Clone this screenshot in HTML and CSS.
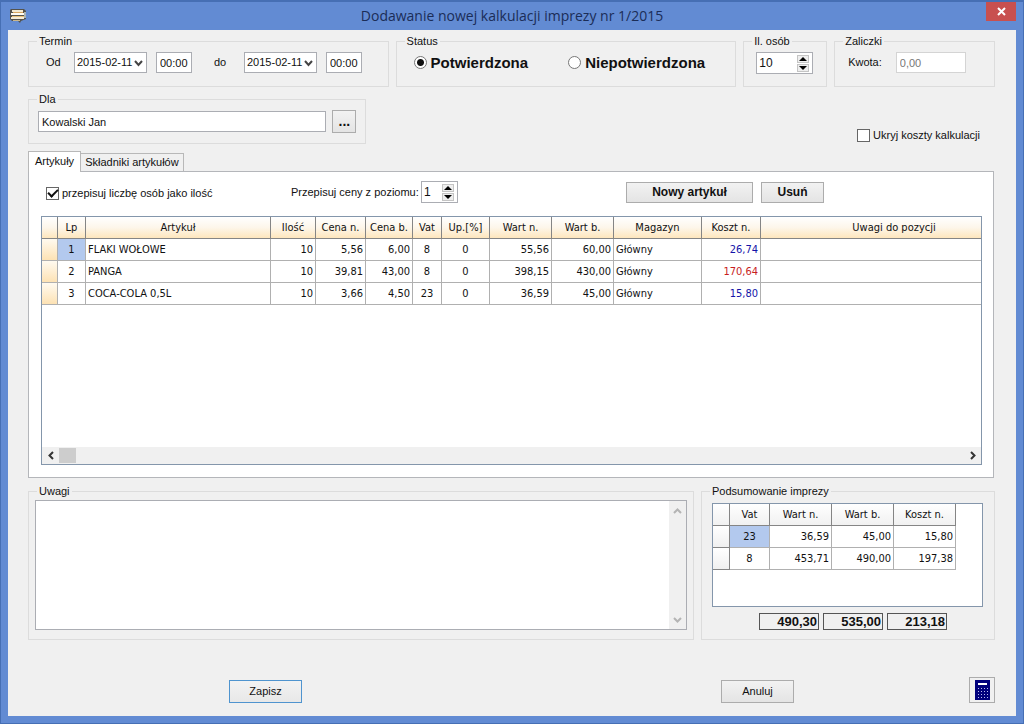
FILE: index.html
```html
<!DOCTYPE html>
<html lang="pl">
<head>
<meta charset="utf-8">
<title>Dodawanie nowej kalkulacji imprezy nr 1/2015</title>
<link rel="stylesheet" href="styles.css">
</head>
<body>
<div class="window">
  <header class="titlebar">
    <svg class="app-icon" width="18" height="16" viewBox="0 0 18 16" aria-hidden="true">
      <path d="M2 1h13l2 2v8l-5 2-1 2-2-2H3l-2-2V2z" fill="#55534c"/>
      <path d="M3 2h11v2H3z" fill="#f3ead2"/>
      <path d="M2 5h13v2H2z" fill="#fffdf4"/>
      <path d="M3 8h12v1H3z" fill="#e9c27a"/>
      <path d="M2 9h13v2H2z" fill="#f4ecd8"/>
      <path d="M4 4h10v1H4z" fill="#d9a860"/>
      <path d="M15 4h2v6h-2z" fill="#a9b4b5"/>
      <path d="M4 12h7v1H4z" fill="#c9b68c"/>
    </svg>
    <h1 class="title">Dodawanie nowej kalkulacji imprezy nr 1/2015</h1>
    <button class="close" type="button" aria-label="Zamknij">
      <svg width="9" height="9" viewBox="0 0 9 9"><path d="M1 1l7 7M8 1L1 8" stroke="#fff" stroke-width="2"/></svg>
    </button>
  </header>

  <form class="content">
    <div class="top-row">
      <fieldset class="group">
        <legend>Termin</legend>
        <div class="line term">
          <label class="od" for="d1">Od</label>
          <span class="combo"><select id="d1"><option>2015-02-11</option></select><svg width="9" height="7" viewBox="0 0 9 7"><path d="M1 1l3.500 4L8 1" fill="none" stroke="#444" stroke-width="2"/></svg></span>
          <input class="time" type="text" value="00:00" aria-label="Godzina od">
          <label class="do" for="d2">do</label>
          <span class="combo"><select id="d2"><option>2015-02-11</option></select><svg width="9" height="7" viewBox="0 0 9 7"><path d="M1 1l3.500 4L8 1" fill="none" stroke="#444" stroke-width="2"/></svg></span>
          <input class="time" type="text" value="00:00" aria-label="Godzina do">
        </div>
      </fieldset>
      <fieldset class="group">
        <legend>Status</legend>
        <div class="line status">
          <label class="radio"><input type="radio" name="status" checked>Potwierdzona</label>
          <label class="radio"><input type="radio" name="status">Niepotwierdzona</label>
        </div>
      </fieldset>
      <fieldset class="group">
        <legend>Il. osób</legend>
        <div class="line people">
          <span class="spin">
            <input type="text" value="10" aria-label="Il. osób">
            <span class="spin-buttons">
              <button type="button" aria-label="Więcej"><svg width="8" height="4" viewBox="0 0 8 4"><path d="M4 0l4 4H0z"/></svg></button>
              <button type="button" aria-label="Mniej"><svg width="8" height="4" viewBox="0 0 8 4"><path d="M0 0h8L4 4z"/></svg></button>
            </span>
          </span>
        </div>
      </fieldset>
      <fieldset class="group">
        <legend>Zaliczki</legend>
        <div class="line advance">
          <label for="kw">Kwota:</label>
          <input id="kw" type="text" value="0,00" disabled>
        </div>
      </fieldset>
    </div>

    <div class="client-row">
      <fieldset class="group client">
        <legend>Dla</legend>
        <div class="line">
          <input class="client-name" type="text" value="Kowalski Jan" aria-label="Dla">
          <button class="btn dots" type="button">...</button>
        </div>
      </fieldset>
      <label class="check hide-costs"><input type="checkbox">Ukryj koszty kalkulacji</label>
    </div>

    <div class="tabs" role="tablist">
      <button class="tab active" type="button" role="tab" aria-selected="true">Artykuły</button>
      <button class="tab" type="button" role="tab" aria-selected="false">Składniki artykułów</button>
    </div>
    <section class="panel">
      <div class="toolbar">
        <label class="check copy"><input type="checkbox" checked>przepisuj liczbę osób jako ilość</label>
        <label class="level" for="lvl">Przepisuj ceny z poziomu:</label>
        <span class="spin small">
          <input id="lvl" type="text" value="1">
          <span class="spin-buttons">
            <button type="button" aria-label="Więcej"><svg width="8" height="4" viewBox="0 0 8 4"><path d="M4 0l4 4H0z"/></svg></button>
            <button type="button" aria-label="Mniej"><svg width="8" height="4" viewBox="0 0 8 4"><path d="M0 0h8L4 4z"/></svg></button>
          </span>
        </span>
        <span class="tools">
          <button class="btn bold add" type="button">Nowy artykuł</button>
          <button class="btn bold remove" type="button">Usuń</button>
        </span>
      </div>
      <div class="grid">
        <div class="grid-view">
          <table class="items">
            <colgroup><col class="w16"><col class="w28"><col class="w185"><col class="w45"><col class="w50"><col class="w47"><col class="w29"><col class="w48"><col class="w62"><col class="w62"><col class="w88"><col class="w59"><col></colgroup>
            <thead><tr><th></th><th>Lp</th><th>Artykuł</th><th>Ilość</th><th>Cena n.</th><th>Cena b.</th><th>Vat</th><th>Up.[%]</th><th>Wart n.</th><th>Wart b.</th><th>Magazyn</th><th>Koszt n.</th><th>Uwagi do pozycji</th></tr></thead>
            <tbody>
              <tr><td class="mark"></td><td class="c selected">1</td><td>FLAKI WOŁOWE</td><td class="r">10</td><td class="r">5,56</td><td class="r">6,00</td><td class="c">8</td><td class="c">0</td><td class="r">55,56</td><td class="r">60,00</td><td>Główny</td><td class="r blue">26,74</td><td></td></tr>
              <tr><td class="mark"></td><td class="c">2</td><td>PANGA</td><td class="r">10</td><td class="r">39,81</td><td class="r">43,00</td><td class="c">8</td><td class="c">0</td><td class="r">398,15</td><td class="r">430,00</td><td>Główny</td><td class="r red">170,64</td><td></td></tr>
              <tr><td class="mark"></td><td class="c">3</td><td>COCA-COLA 0,5L</td><td class="r">10</td><td class="r">3,66</td><td class="r">4,50</td><td class="c">23</td><td class="c">0</td><td class="r">36,59</td><td class="r">45,00</td><td>Główny</td><td class="r blue">15,80</td><td></td></tr>
            </tbody>
          </table>
        </div>
        <div class="hscroll">
          <button type="button" aria-label="W lewo"><svg width="6" height="9" viewBox="0 0 6 9"><path d="M5 1L1.500 4.500 5 8" fill="none" stroke="#333" stroke-width="2"/></svg></button>
          <span class="thumb"></span>
          <button type="button" aria-label="W prawo"><svg width="6" height="9" viewBox="0 0 6 9"><path d="M1 1l3.500 3.500L1 8" fill="none" stroke="#333" stroke-width="2"/></svg></button>
        </div>
      </div>
    </section>

    <div class="lower">
      <fieldset class="group notes">
        <legend>Uwagi</legend>
        <div class="memo">
          <textarea aria-label="Uwagi"></textarea>
          <div class="vscroll">
            <button type="button" aria-label="W górę"><svg width="9" height="6" viewBox="0 0 9 6"><path d="M1 5l3.500-3.500L8 5" fill="none" stroke="#b4b4b4" stroke-width="2"/></svg></button>
            <button type="button" aria-label="W dół"><svg width="9" height="6" viewBox="0 0 9 6"><path d="M1 1l3.500 3.500L8 1" fill="none" stroke="#b4b4b4" stroke-width="2"/></svg></button>
          </div>
        </div>
      </fieldset>
      <fieldset class="group summary">
        <legend>Podsumowanie imprezy</legend>
        <div class="sum-grid">
          <table class="sums">
            <colgroup><col class="w16"><col class="w40"><col class="w62"><col class="w62"><col class="w62"></colgroup>
            <thead><tr><th></th><th>Vat</th><th>Wart n.</th><th>Wart b.</th><th>Koszt n.</th></tr></thead>
            <tbody>
              <tr><td class="mark"></td><td class="c selected">23</td><td class="r">36,59</td><td class="r">45,00</td><td class="r">15,80</td></tr>
              <tr><td class="mark"></td><td class="c">8</td><td class="r">453,71</td><td class="r">490,00</td><td class="r">197,38</td></tr>
            </tbody>
          </table>
        </div>
        <div class="totals"><output>490,30</output><output>535,00</output><output>213,18</output></div>
      </fieldset>
    </div>

    <footer class="actions">
      <button class="btn save" type="button">Zapisz</button>
      <button class="btn cancel" type="button">Anuluj</button>
      <button class="btn calc" type="button" aria-label="Kalkulator">
        <svg width="15" height="20" viewBox="0 0 15 20">
          <path d="M0 0h15v20H0z" fill="#00007c"/>
          <path d="M3 3h9v2H3z" fill="#fff"/>
          <path d="M3 8h1v1H3zM6 8h1v1H6zM9 8h1v1H9zM12 8h1v1h-1zM3 11h1v1H3zM6 11h1v1H6zM9 11h1v1H9zM12 11h1v1h-1zM3 14h1v1H3zM6 14h1v1H6zM9 14h1v1H9zM12 14h1v1h-1zM3 17h1v1H3zM6 17h1v1H6zM9 17h1v1H9zM12 17h1v1h-1z" fill="#b9b9ee"/>
        </svg>
      </button>
    </footer>
  </form>
</div>
</body>
</html>
```

FILE: styles.css
```css
* { box-sizing: border-box; }

body {
  margin: 0;
  font: 11px/13px "Liberation Sans", Arial, sans-serif;
  color: #111;
}

input, select, textarea, button { font: inherit; color: inherit; margin: 0; }
button { padding: 0; }

.window {
  display: flex;
  flex-direction: column;
  min-height: 100vh;
  padding: 0 7px 7px;
  background: #628bd3;
  border: 1px solid #466fb4;
  border-top-width: 2px;
}

.titlebar {
  display: grid;
  grid-template-columns: 1fr auto 1fr;
  height: 28px;
}
.app-icon { margin: 6px 0 0 1px; }
.title {
  margin: 0;
  font: 14px/27px "Open Sans", "Noto Sans", sans-serif;
  color: #1b2d57;
}
.close {
  display: flex;
  align-items: center;
  justify-content: center;
  justify-self: end;
  width: 30px;
  height: 19px;
  background: #c8504f;
  border: 0;
}

.content {
  display: flex;
  flex: 1;
  flex-direction: column;
  padding: 5px 21px 13px 20px;
  background: #f0f0f0;
}

.group {
  min-width: 0;
  margin: 0;
  padding: 0;
  border: 1px solid #dcdcdc;
}
.group legend { margin-left: 8px; padding: 0 2px; }

.line { display: flex; align-items: center; padding: 4px 9px 12px; }
.line input, .combo select {
  height: 21px;
  padding: 0 3px;
  background: #fff;
  border: 1px solid #abadb3;
  border-radius: 0;
}

.top-row {
  display: grid;
  grid-template-columns: 361fr 341fr 84fr 161fr;
  gap: 7px;
}

.term { padding-left: 17px; }
.od { width: 28px; }
.do { width: 30px; margin-left: 22px; }
.combo { position: relative; width: 73px; margin-right: 9px; }
.combo select { width: 100%; appearance: none; padding: 0 2px; }
.combo svg { position: absolute; right: 4px; top: 8px; pointer-events: none; }
.line .time { width: 36px; }

.status { gap: 40px; padding-left: 17px; }
.radio { display: flex; align-items: center; gap: 4px; font-size: 15px; line-height: 21px; font-weight: bold; }
.line .radio input {
  appearance: none;
  width: 13px;
  height: 13px;
  padding: 0;
  border: 1px solid #777;
  border-radius: 50%;
}
.line .radio input:checked { background: radial-gradient(circle, #111 0 3px, #fff 4px); }

.people { padding-left: 12px; }
.spin {
  display: flex;
  align-items: center;
  width: 57px;
  height: 22px;
  padding-right: 3px;
  background: #fff;
  border: 1px solid #abadb3;
}
.spin input {
  flex: 1;
  min-width: 0;
  width: 100%;
  height: 18px;
  padding: 0 2px;
  font-size: 12px;
  border: 0;
  background: none;
}
.spin-buttons { display: grid; gap: 1px; }
.spin-buttons button {
  display: flex;
  align-items: center;
  justify-content: center;
  width: 12px;
  height: 8px;
  background: #eee;
  border: 1px solid #c4c4c4;
}
.small { width: 37px; }

.advance { gap: 14px; padding-left: 13px; }
.line #kw { width: 70px; border-color: #d4d4d4; color: #777; }

.client-row { display: flex; justify-content: space-between; margin-top: 6px; }
.client { flex: 0 0 35%; }
.client .line { gap: 6px; padding-bottom: 10px; }
.line .client-name { flex: 1; min-width: 0; }

.btn {
  height: 23px;
  background: linear-gradient(#f2f2f2, #e4e4e4);
  border: 1px solid #acacac;
}
.dots { width: 24px; font-size: 14px; font-weight: bold; }

.check { display: flex; align-items: center; gap: 3px; }
.check input {
  appearance: none;
  display: grid;
  place-items: center;
  width: 13px;
  height: 13px;
  background: #fff;
  border: 1px solid #666;
}
.check input:checked::after {
  content: "";
  width: 8px;
  height: 4px;
  margin-bottom: 3px;
  border: solid #111;
  border-width: 0 0 2px 2px;
  transform: rotate(-45deg);
}
.hide-costs { align-self: flex-end; margin: 0 15px 2px 0; }

.tabs { display: flex; align-items: flex-end; margin-top: 7px; }
.tab {
  height: 18px;
  padding: 0 4px;
  background: #f0f0f0;
  border: 1px solid #b8b8b8;
  border-width: 1px 1px 0 0;
}
.tab.active {
  height: 21px;
  margin-bottom: -1px;
  padding: 0 6px 1px;
  background: #fff;
  border-left-width: 1px;
  z-index: 1;
}

.panel {
  display: flex;
  flex: 1;
  flex-direction: column;
  gap: 13px;
  margin-right: 1px;
  padding: 9px 11px 12px 12px;
  background: #fff;
  border: 1px solid #b4b6ba;
}
.toolbar { display: flex; align-items: center; padding-left: 5px; }
.copy { flex: 0 0 245px; margin-top: 2px; }
.level { width: 130px; white-space: nowrap; }
.tools { display: flex; gap: 8px; margin-left: 168px; }
.bold { font-size: 12px; font-weight: bold; height: 21px; }
.add { width: 127px; }
.remove { width: 63px; }

.grid {
  display: flex;
  flex: 1;
  flex-direction: column;
  justify-content: space-between;
  border: 1px solid #8496ab;
}
.grid-view { overflow: hidden; }

table {
  table-layout: fixed;
  border-collapse: separate;
  border-spacing: 0;
  font: 11px/13px "DejaVu Sans Condensed", "DejaVu Sans", sans-serif;
}
.items { width: calc(100% + 47px); }
.sums { width: 243px; }
.w16 { width: 16px; }
.sums .w16 { width: 17px; }
.w28 { width: 28px; }
.w29 { width: 29px; }
.w40 { width: 40px; }
.w45 { width: 45px; }
.w47 { width: 47px; }
.w48 { width: 48px; }
.w50 { width: 50px; }
.w59 { width: 59px; }
.w62 { width: 62px; }
.w88 { width: 88px; }
.w185 { width: 185px; }

th, td {
  height: 22px;
  padding: 0 2px;
  text-align: left;
  white-space: nowrap;
  border: solid #b0b0b0;
  border-width: 0 1px 1px 0;
}
th {
  padding: 0;
  font-weight: normal;
  text-align: center;
  border-color: #858585;
}
.items th { background: linear-gradient(#fff, #fdf6ea 50%, #fee6bd); }
.sums th { background: linear-gradient(#fff, #f1f1f1); }
.items .mark { background: linear-gradient(#fffaf0, #fde2b4); }
.sums .mark { background: linear-gradient(#fff, #f0f0f0); border-color: #858585; }
.c { text-align: center; }
.r { text-align: right; }
.selected { background: #b3c9ee; }
.blue { color: #1414a8; }
.red { color: #c81e1e; }

.hscroll {
  display: flex;
  height: 17px;
  background: #f0f0f0;
}
.hscroll button {
  display: flex;
  align-items: center;
  justify-content: center;
  width: 17px;
  background: none;
  border: 0;
}
.hscroll .thumb { width: 17px; margin: 1px auto 1px 0; background: #cdcdcd; }

.lower {
  display: grid;
  grid-template-columns: 666fr 294fr;
  gap: 7px;
  margin-top: 7px;
}
.notes { display: flex; }
.memo {
  display: flex;
  flex: 1;
  height: 130px;
  margin: 2px 6px 9px;
  background: #fff;
  border: 1px solid #abadb3;
}
.memo textarea { flex: 1; min-width: 0; border: 0; resize: none; background: none; }
.vscroll {
  display: flex;
  flex-direction: column;
  justify-content: space-between;
  width: 17px;
  background: #f0f0f0;
}
.vscroll button { height: 19px; background: none; border: 0; }

.sum-grid {
  height: 104px;
  margin: 5px 11px 0 10px;
  background: #fff;
  border: 1px solid #8496ab;
}
.totals { display: flex; gap: 4px; margin: 6px 0 9px 57px; }
.totals output {
  width: 60px;
  padding: 0 1px;
  font-size: 13px;
  line-height: 15px;
  font-weight: bold;
  text-align: right;
  border: 1px solid #555;
}

.actions {
  display: grid;
  grid-template-columns: 201fr 73px 419fr 73px 175fr 26px;
  align-items: end;
  margin-top: 37px;
}
.btn.save { grid-column: 2; background: linear-gradient(#f2f2f2, #e8e8e8); border: 1px solid #4f94cf; }
.cancel { grid-column: 4; }
.btn.calc {
  display: flex;
  grid-column: 6;
  align-items: center;
  justify-content: center;
  height: 26px;
  background: #f0f0f0;
}
```
